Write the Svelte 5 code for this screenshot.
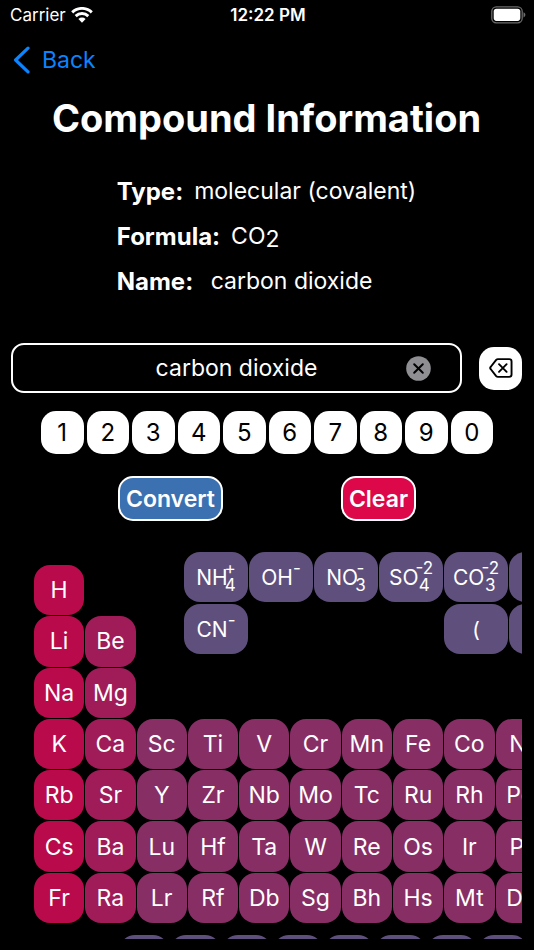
<script>
  const digits = ['1', '2', '3', '4', '5', '6', '7', '8', '9', '0'];

  // Polyatomic ions and brackets, placed by column
  const ions = [
    { base: 'NH', sub: '4', sup: '+', row: 1, col: 1 },
    { base: 'OH', sub: '', sup: '-', row: 1, col: 2 },
    { base: 'NO', sub: '3', sup: '-', row: 1, col: 3 },
    { base: 'SO', sub: '4', sup: '-2', row: 1, col: 4 },
    { base: 'CO', sub: '3', sup: '-2', row: 1, col: 5 },
    { base: 'O', sub: '2', sup: '-2', row: 1, col: 6 },
    { base: 'CN', sub: '', sup: '-', row: 2, col: 1 },
    { base: '(', sub: '', sup: '', row: 2, col: 5 },
    { base: ')', sub: '', sup: '', row: 2, col: 6 }
  ];

  // One array per period, each starting at group 1
  const periods = [
    ['H'],
    ['Li', 'Be'],
    ['Na', 'Mg'],
    ['K', 'Ca', 'Sc', 'Ti', 'V', 'Cr', 'Mn', 'Fe', 'Co', 'Ni', 'Cu', 'Zn'],
    ['Rb', 'Sr', 'Y', 'Zr', 'Nb', 'Mo', 'Tc', 'Ru', 'Rh', 'Pd', 'Ag', 'Cd'],
    ['Cs', 'Ba', 'Lu', 'Hf', 'Ta', 'W', 'Re', 'Os', 'Ir', 'Pt', 'Au', 'Hg'],
    ['Fr', 'Ra', 'Lr', 'Rf', 'Db', 'Sg', 'Bh', 'Hs', 'Mt', 'Ds', 'Rg', 'Cn']
  ];

  const lanthanides = ['La', 'Ce', 'Pr', 'Nd', 'Pm', 'Sm', 'Eu', 'Gd', 'Tb', 'Dy', 'Ho', 'Er', 'Tm', 'Yb'];

  const elements = periods.flatMap((period, row) =>
    period.map((symbol, col) => ({ symbol, row: row + 1, col: col + 1 }))
  );

  let compound = $state('carbon dioxide');

  function group(col) {
    if (col === 1) return 'alkali';
    if (col === 2) return 'alkaline';
    return 'transition';
  }

  function add(text) {
    compound += text;
  }

  function backspace() {
    compound = compound.slice(0, -1);
  }

  function clear() {
    compound = '';
  }
</script>

<div class="screen">
  <div class="status">
    <div class="carrier">
      <span>Carrier</span>
      <svg width="22" height="16" viewBox="0 0 22 16" aria-hidden="true">
        <g fill="none" stroke="#fff" stroke-width="2.9">
          <path d="M1.2 5.4a14 14 0 0 1 19.6 0" />
          <path d="M4.7 9.1a9 9 0 0 1 12.6 0" />
        </g>
        <path d="M11 15.7 7.4 12a5.2 5.2 0 0 1 7.2 0z" fill="#fff" />
      </svg>
    </div>
    <span class="time">12:22 PM</span>
    <svg class="battery" width="35" height="18" viewBox="0 0 35 18" aria-hidden="true">
      <rect x="0.8" y="0.8" width="30.4" height="16" rx="4.5" fill="none" stroke="#6b6b6b" stroke-width="1.3" />
      <rect x="2.7" y="2.7" width="26.6" height="12.2" rx="2.8" fill="#fff" />
      <path d="M32.5 6.2c1.2.4 1.9 1.4 1.9 2.6s-.7 2.2-1.9 2.6z" fill="#6b6b6b" />
    </svg>
  </div>

  <nav>
    <a href="#back">
      <svg width="18" height="28" viewBox="0 0 18 28" aria-hidden="true">
        <path d="M15 2.2 2.6 14 15 25.8" fill="none" stroke="#0a84ff" stroke-width="3.2" stroke-linecap="round" stroke-linejoin="round" />
      </svg>
      Back
    </a>
  </nav>

  <h1>Compound Information</h1>

  <dl>
    <div><dt>Type:</dt><dd>molecular (covalent)</dd></div>
    <div><dt>Formula:</dt><dd>CO<span class="low">2</span></dd></div>
    <div><dt>Name:</dt><dd>&nbsp;carbon dioxide</dd></div>
  </dl>

  <div class="entry">
    <div class="field">
      <input type="text" aria-label="Compound" bind:value={compound} />
      <button class="wipe" aria-label="Clear text" onclick={clear}>
        <svg width="25" height="25" viewBox="0 0 25 25" aria-hidden="true">
          <circle cx="12.5" cy="12.5" r="12.3" fill="#8e8e93" />
          <path d="M8.2 8.2l8.6 8.6M16.8 8.2l-8.6 8.6" stroke="#000" stroke-width="2" stroke-linecap="round" />
        </svg>
      </button>
    </div>
    <button class="key delete" aria-label="Delete" onclick={backspace}>
      <svg width="24" height="20" viewBox="0 0 26 22" aria-hidden="true">
        <g fill="none" stroke="#000" stroke-width="2.1" stroke-linecap="round" stroke-linejoin="round">
          <path d="M9.6 1.2h12.4a2.6 2.6 0 0 1 2.6 2.6v14.4a2.6 2.6 0 0 1-2.6 2.6H9.6a2.6 2.6 0 0 1-1.9-.8L1.8 12.4a2 2 0 0 1 0-2.8l5.9-7.6a2.6 2.6 0 0 1 1.9-.8z" />
          <path d="M10.8 6.8l8.4 8.4M19.2 6.8l-8.4 8.4" />
        </g>
      </svg>
    </button>
  </div>

  <div class="digits">
    {#each digits as digit}
      <button class="key" onclick={() => add(digit)}>{digit}</button>
    {/each}
  </div>

  <div class="actions">
    <button class="convert">Convert</button>
    <button class="clear" onclick={clear}>Clear</button>
  </div>

  <div class="scroller">
    <div class="table">
      <div class="elements">
        {#each elements as el}
          <button
            class="cell {group(el.col)}"
            style="grid-row: {el.row}; grid-column: {el.col}"
            onclick={() => add(el.symbol)}>{el.symbol}</button>
        {/each}
      </div>
      <div class="ions">
        {#each ions as ion}
          <button
            class="cell ion"
            style="grid-row: {ion.row}; grid-column: {ion.col}"
            onclick={() => add(ion.base + ion.sub)}>
            {ion.base}{#if ion.sup}<span class="scripts" class:tight={ion.sub}><span>{ion.sup}</span><span>{ion.sub}</span></span>{/if}
          </button>
        {/each}
      </div>
    </div>
    <div class="lanthanides">
      {#each lanthanides as symbol}
        <button class="cell ion" onclick={() => add(symbol)}>{symbol}</button>
      {/each}
    </div>
  </div>
</div>

<style>
  :global(body) {
    background: #000;
  }

  .screen {
    box-sizing: border-box;
    display: flex;
    flex-direction: column;
    height: 100vh;
    padding: 0 12px 11px 11px;
    background: #000;
    color: #fff;
    font-family: Inter, "Liberation Sans", sans-serif;
    font-size: 23px;
  }

  button,
  input {
    box-sizing: border-box;
    margin: 0;
    padding: 0;
    border: 0;
    font: inherit;
    color: inherit;
  }

  svg {
    display: block;
  }

  .status {
    display: grid;
    grid-template-columns: 1fr auto 1fr;
    align-items: center;
    height: 30px;
    margin: 0 -4px 0 -2px;
    padding-left: 1px;
    font-size: 17px;
  }

  .carrier {
    display: flex;
    align-items: center;
    gap: 5px;
  }

  .time {
    font-weight: 600;
  }

  .battery {
    justify-self: end;
  }

  nav a {
    display: inline-flex;
    align-items: center;
    gap: 11px;
    height: 60px;
    padding-left: 2px;
    color: #0a84ff;
    text-decoration: none;
  }

  h1 {
    margin: 4px 0 0;
    font-size: 38px;
    line-height: 48px;
    font-weight: 700;
    text-align: center;
  }

  dl {
    width: fit-content;
    margin: 27px auto 0;
  }

  dl div {
    display: flex;
    gap: 11px;
    line-height: 45px;
  }

  dt {
    font-size: 24px;
    font-weight: 700;
  }

  dd {
    margin: 0;
  }

  .low {
    position: relative;
    top: 3px;
  }

  .entry {
    display: flex;
    align-items: center;
    gap: 17px;
    margin-top: 39px;
  }

  .field {
    position: relative;
    flex: 1;
  }

  input {
    display: block;
    width: 100%;
    height: 50px;
    border: 2px solid #fff;
    border-radius: 13px;
    background: #000;
    text-align: center;
    outline: none;
  }

  .wipe {
    position: absolute;
    top: 13px;
    right: 31px;
    background: none;
  }

  .key {
    height: 43px;
    border-radius: 15px;
    background: #fff;
    color: #000;
    font-size: 24px;
  }

  .delete {
    display: flex;
    align-items: center;
    justify-content: center;
    width: 43px;
  }

  .digits {
    display: grid;
    grid-template-columns: repeat(10, 1fr);
    gap: 3px;
    margin: 18px 29px 0 30px;
  }

  .actions {
    display: flex;
    justify-content: space-evenly;
    margin: 22px -12px 0 -11px;
  }

  .actions button {
    height: 45px;
    padding: 0 6px;
    border: 2px solid #fff;
    border-radius: 15px;
    font-weight: 600;
  }

  .convert {
    background: #3b71b0;
  }

  .clear {
    background: #dc0849;
  }

  .scroller {
    flex: 1;
    min-height: 0;
    margin-top: 31px;
    overflow: auto;
    scrollbar-width: none;
  }

  .table {
    display: grid;
    justify-content: start;
  }

  .elements,
  .ions {
    grid-area: 1 / 1;
    display: grid;
  }

  .elements {
    grid-template-columns: repeat(18, 1fr);
    grid-template-rows: repeat(7, 1fr);
    gap: 1px;
    width: 922px;
    height: 358px;
    margin: 13px 0 0 23px;
  }

  .ions {
    grid-template-columns: repeat(6, 64px);
    grid-auto-rows: 50px;
    gap: 2px 1px;
    align-self: start;
    margin-left: 173px;
  }

  .cell {
    border-radius: 16px;
    text-align: center;
  }

  .alkali {
    background: #b90b4c;
  }

  .alkaline {
    background: #9f1c59;
  }

  .transition {
    background: #872e65;
  }

  .ion {
    display: flex;
    align-items: center;
    justify-content: center;
    background: #5f4f7c;
    font-size: 21px;
  }

  .scripts {
    display: flex;
    flex-direction: column;
    align-items: center;
    font-size: 17px;
    line-height: 17px;
  }

  .scripts span {
    min-height: 17px;
  }

  .tight {
    margin-left: -3px;
  }

  .lanthanides {
    display: grid;
    grid-template-columns: repeat(14, 1fr);
    grid-auto-rows: 50px;
    gap: 1px;
    width: 717px;
    margin: 12px 0 0 108px;
  }
</style>
